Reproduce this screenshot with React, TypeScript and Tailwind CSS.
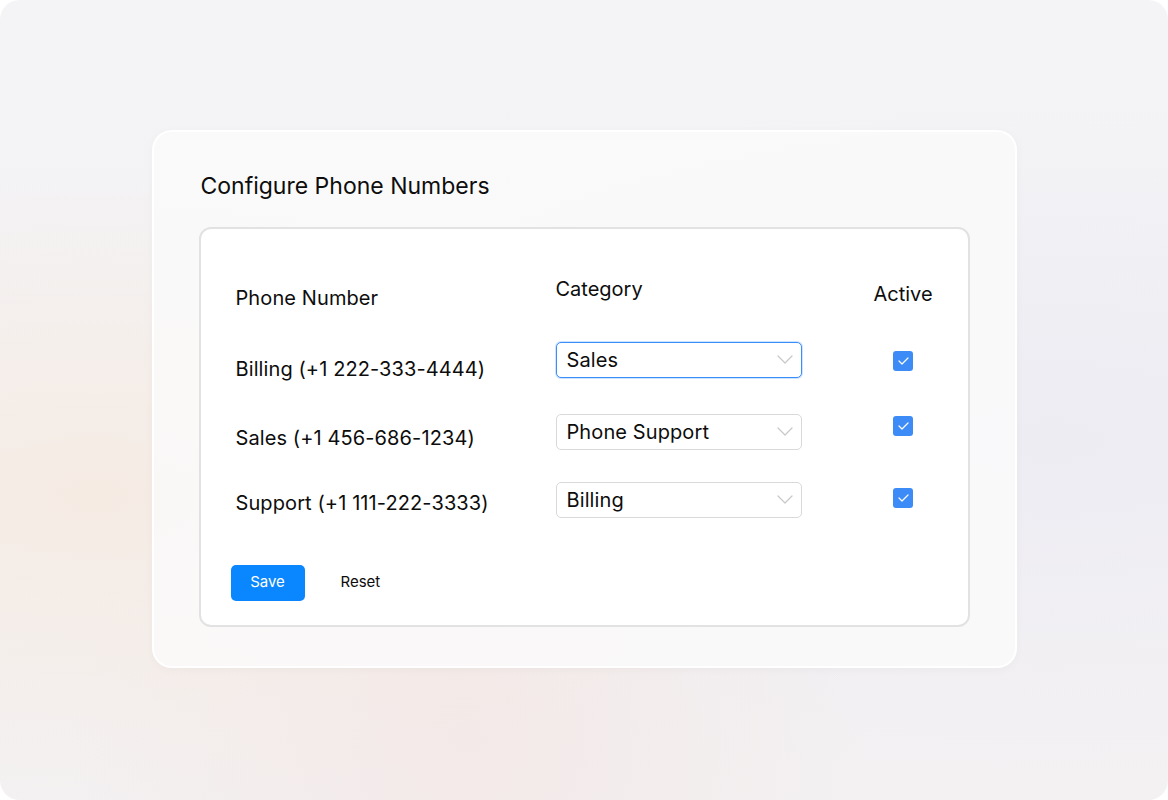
import React from "react";

const font = { fontFamily: "Inter, 'Noto Sans', sans-serif" };

function Chevron() {
  return (
    <svg width="16" height="9" viewBox="0 0 16 9" fill="none" className="shrink-0">
      <path d="M1 1l7 7 7-7" stroke="#c9c9c9" strokeWidth="1.3" strokeLinecap="round" strokeLinejoin="round" />
    </svg>
  );
}

function Select({ value, focused }: { value: string; focused?: boolean }) {
  return (
    <div
      className={
        focused
          ? "h-9 w-[246px] rounded-[5px] border border-[#3b8ef7] bg-white pl-[10px] pr-[8px] flex items-center justify-between shadow-[0_0_0_1px_rgba(59,142,247,0.25)]"
          : "h-9 w-[246px] rounded-[5px] border border-[#d9d9d9] bg-white pl-[10px] pr-[8px] flex items-center justify-between"
      }
    >
      <span className="text-[20px] leading-[28px] text-[#0d0d0d] tracking-[0.005em]">{value}</span>
      <Chevron />
    </div>
  );
}

function Check() {
  return (
    <div className="w-5 h-5 rounded-[3px] bg-[#3d8bf6] flex items-center justify-center">
      <svg width="11" height="8" viewBox="0 0 11 8" fill="none">
        <path d="M1 4l3 3 6-6" stroke="white" strokeWidth="1.2" strokeLinecap="round" strokeLinejoin="round" />
      </svg>
    </div>
  );
}

export default function App() {
  return (
    <div className="w-[1168px] h-[800px] bg-white" style={font}>
      <div className="w-full h-full pb-[3px] rounded-[20px] flex items-center justify-center bg-[radial-gradient(ellipse_at_8%_62%,#f5ebe3_0%,rgba(245,235,227,0)_45%),radial-gradient(ellipse_at_40%_92%,#f3e9e8_0%,rgba(243,233,232,0)_40%),radial-gradient(ellipse_at_90%_55%,#edecf3_0%,rgba(237,236,243,0)_55%),linear-gradient(180deg,#f4f3f5_0%,#f3f1f2_100%)]">
        <div className="w-[865px] h-[538px] rounded-[20px] border-2 border-white/90 bg-[#fafafa]/85 shadow-[0_2px_10px_rgba(0,0,0,0.03)] px-[45px] pt-[39px]">
          <h1 className="text-[23px] leading-[30px] text-[#0d0d0d] font-normal pl-[2px]">Configure Phone Numbers</h1>
          <div className="mt-[26px] h-[400px] rounded-[12px] border-2 border-[#e2e2e2] bg-white pl-[35px] pr-[34px] pt-[1px]">
            <div className="flex items-start">
              <div className="w-[320px] flex flex-col text-[20px] leading-[28px] text-[#0d0d0d] tracking-[0.005em]">
                <div className="mt-[54px]">Phone Number</div>
                <div className="mt-[43px]">Billing (+1 222-333-4444)</div>
                <div className="mt-[41px]">Sales (+1 456-686-1234)</div>
                <div className="mt-[37px]">Support (+1 111-222-3333)</div>
              </div>
              <div className="w-[318px] flex flex-col text-[20px] leading-[28px] text-[#0d0d0d]">
                <div className="mt-[45px]">Category</div>
                <div className="mt-[39px]"><Select value="Sales" focused /></div>
                <div className="mt-[36px]"><Select value="Phone Support" /></div>
                <div className="mt-[32px]"><Select value="Billing" /></div>
              </div>
              <div className="flex flex-col items-center text-[20px] leading-[28px] text-[#0d0d0d]">
                <div className="mt-[50px]">Active</div>
                <div className="mt-[43px]"><Check /></div>
                <div className="mt-[45px]"><Check /></div>
                <div className="mt-[52px]"><Check /></div>
              </div>
            </div>
            <div className="mt-[47px] flex items-center -ml-[5px]">
              <button className="h-9 w-[74px] rounded-[5px] bg-[#0a86fe] text-white text-[15px]">Save</button>
              <button className="ml-[36px] text-[15px] text-[#0d0d0d]">Reset</button>
            </div>
          </div>
        </div>
      </div>
    </div>
  );
}
